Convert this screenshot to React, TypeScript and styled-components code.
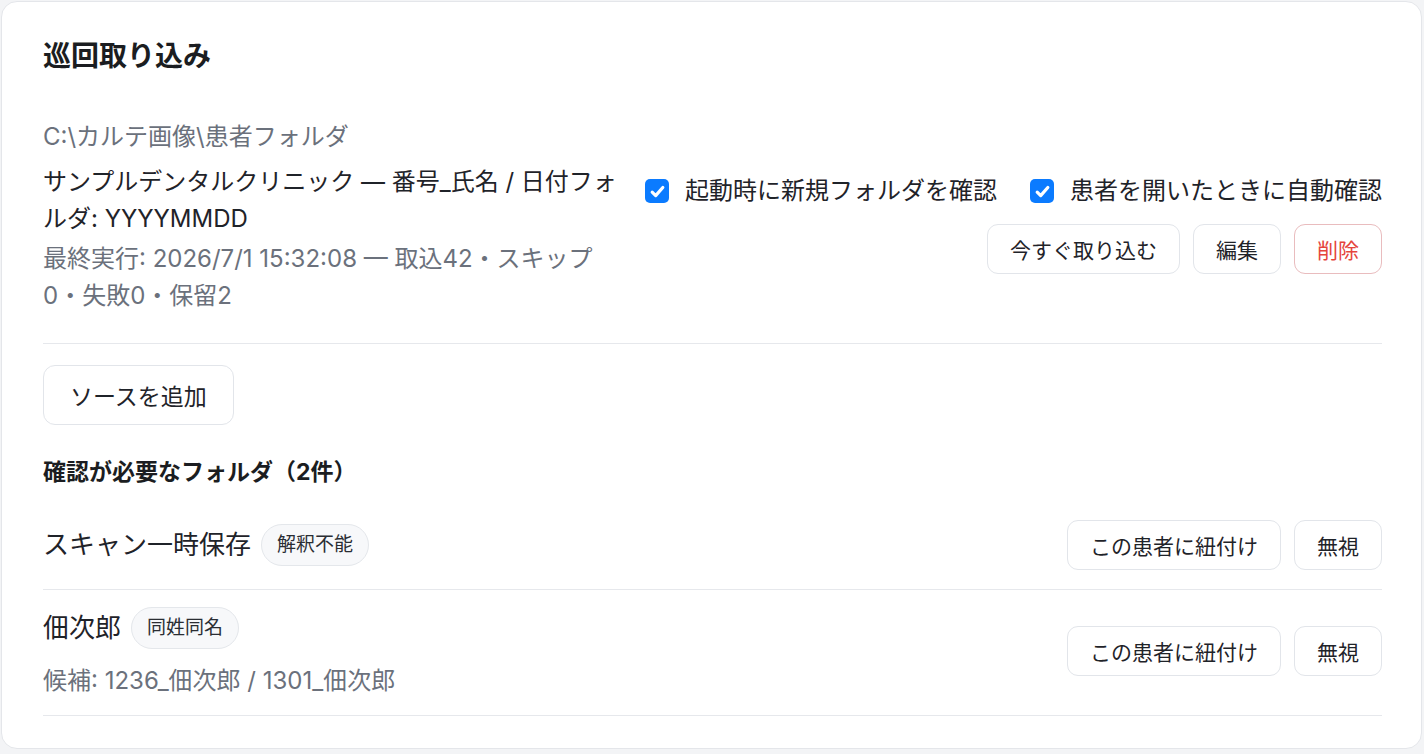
import styled, { createGlobalStyle } from "styled-components";

const GlobalStyle = createGlobalStyle`
  html, body {
    margin: 0;
    padding: 0;
    background: #f3f4f6;
  }
  body {
    font-family: "Inter", "Noto Sans CJK JP", sans-serif;
    color: #1f2329;
    -webkit-font-smoothing: antialiased;
  }
  * {
    box-sizing: border-box;
  }
`;

const Card = styled.section`
  width: 1421px;
  margin: 1px 0 3px 1px;
  background: #fff;
  border: 1.5px solid #e4e6ea;
  border-radius: 16px;
  padding: 34px 39px 32px 41px;
`;

const Title = styled.h2`
  margin: 0;
  font-size: 28px;
  line-height: 40px;
  font-weight: 700;
  color: #1b1d21;
`;

const SourceRow = styled.div`
  margin-top: 42px;
  display: flex;
  align-items: center;
  gap: 26px;
  padding-bottom: 28px;
  border-bottom: 1.5px solid #e6e8ec;
`;

const SourceInfo = styled.div`
  flex: 1;
  min-width: 0;
  font-size: 24px;
  line-height: 37.5px;
`;

const Muted = styled.div<{ $gap?: number }>`
  color: #6b717c;
  margin-top: ${(p) => p.$gap ?? 0}px;
`;

const SourceName = styled.div`
  margin-top: 7px;
  color: #1f2329;
`;

const SourceSide = styled.div`
  display: flex;
  flex-direction: column;
  align-items: flex-end;
  gap: 18px;
  margin-top: 18px;
`;

const CheckRow = styled.div`
  display: flex;
  gap: 33px;
`;

const CheckLabel = styled.label`
  display: flex;
  align-items: center;
  gap: 16px;
  font-size: 24px;
  line-height: 30px;
  color: #1f2329;
  cursor: pointer;
`;

const CheckBox = styled.span`
  width: 24px;
  height: 24px;
  border-radius: 5px;
  background: #0b7bff;
  display: flex;
  align-items: center;
  justify-content: center;
  flex-shrink: 0;
`;

const ButtonRow = styled.div`
  display: flex;
  align-items: center;
  gap: 13px;
`;

const Button = styled.button<{ $danger?: boolean }>`
  height: 50px;
  padding: 0 22px;
  border-radius: 11px;
  border: 1.5px solid ${(p) => (p.$danger ? "#e9bcbe" : "#e2e5ea")};
  background: #fff;
  color: ${(p) => (p.$danger ? "#e5443c" : "#1f2329")};
  font-family: inherit;
  font-size: 21px;
  white-space: nowrap;
  cursor: pointer;
`;

const AddButton = styled(Button)`
  margin-top: 21px;
  height: 60px;
  padding: 0 26px;
  border-radius: 12px;
  font-size: 23px;
`;

const SectionTitle = styled.h3`
  margin: 30px 0 0;
  font-size: 23px;
  line-height: 34px;
  font-weight: 700;
  color: #1b1d21;
`;

const PendingList = styled.div`
  margin-top: 14px;
`;

const PendingRow = styled.div`
  display: flex;
  align-items: center;
  justify-content: space-between;
  gap: 24px;
  padding: 17px 0 19px;
  border-bottom: 1.5px solid #e6e8ec;
`;

const PendingInfo = styled.div`
  display: flex;
  flex-direction: column;
  gap: 17px;
`;

const NameLine = styled.div`
  display: flex;
  align-items: center;
  gap: 10px;
  font-size: 26px;
  line-height: 42px;
  color: #1f2329;
`;

const Badge = styled.span`
  height: 42px;
  padding: 0 15px;
  display: inline-flex;
  align-items: center;
  border-radius: 21px;
  border: 1.5px solid #e4e7eb;
  background: #f7f8fa;
  font-size: 19px;
  color: #2a2d33;
`;

const Candidates = styled.div`
  font-size: 24px;
  line-height: 30px;
  color: #6b717c;
`;

const Check = () => (
  <CheckBox>
    <svg width="17" height="17" viewBox="0 0 16 16" fill="none">
      <path
        d="M3 8.6 6.3 11.9 13 4.2"
        stroke="#fff"
        strokeWidth="3"
        strokeLinecap="round"
        strokeLinejoin="round"
      />
    </svg>
  </CheckBox>
);

const pending = [
  { name: "スキャン一時保存", badge: "解釈不能" },
  {
    name: "佃次郎",
    badge: "同姓同名",
    candidates: "候補: 1236_佃次郎 / 1301_佃次郎",
  },
];

export default function App() {
  return (
    <>
      <GlobalStyle />
      <Card>
        <Title>巡回取り込み</Title>
        <SourceRow>
          <SourceInfo>
            <Muted>C:\カルテ画像\患者フォルダ</Muted>
            <SourceName>
              サンプルデンタルクリニック — 番号_氏名 / 日付フォルダ: YYYYMMDD
            </SourceName>
            <Muted $gap={2}>
              最終実行: 2026/7/1 15:32:08 — 取込42・スキップ0・失敗0・保留2
            </Muted>
          </SourceInfo>
          <SourceSide>
            <CheckRow>
              <CheckLabel>
                <Check />
                起動時に新規フォルダを確認
              </CheckLabel>
              <CheckLabel>
                <Check />
                患者を開いたときに自動確認
              </CheckLabel>
            </CheckRow>
            <ButtonRow>
              <Button>今すぐ取り込む</Button>
              <Button>編集</Button>
              <Button $danger>削除</Button>
            </ButtonRow>
          </SourceSide>
        </SourceRow>
        <AddButton>ソースを追加</AddButton>
        <SectionTitle>確認が必要なフォルダ（2件）</SectionTitle>
        <PendingList>
          {pending.map((item) => (
            <PendingRow key={item.name}>
              <PendingInfo>
                <NameLine>
                  {item.name}
                  <Badge>{item.badge}</Badge>
                </NameLine>
                {item.candidates && <Candidates>{item.candidates}</Candidates>}
              </PendingInfo>
              <ButtonRow>
                <Button>この患者に紐付け</Button>
                <Button>無視</Button>
              </ButtonRow>
            </PendingRow>
          ))}
        </PendingList>
      </Card>
    </>
  );
}
